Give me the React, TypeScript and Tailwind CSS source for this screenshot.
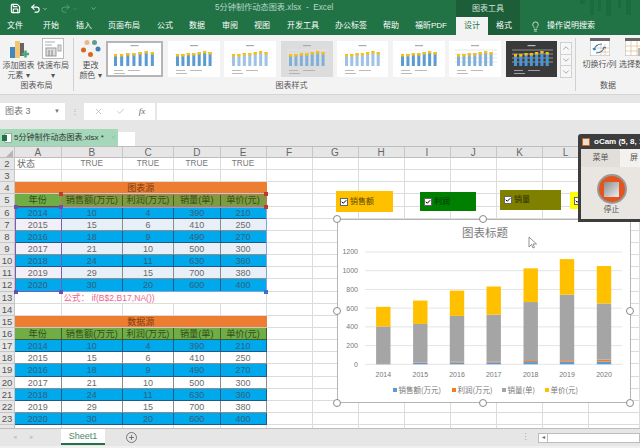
import React from 'react';
import { Save, Undo2, Redo2, ChevronDown, ChevronUp, Lightbulb, X, Check, Plus } from 'lucide-react';

const ribbonTabs = [
  { label: '文件', w: 'w-[30px]' },
  { label: '开始', w: 'w-[42px]' },
  { label: '插入', w: 'w-[24px]' },
  { label: '页面布局', w: 'w-[56px]' },
  { label: '公式', w: 'w-[26px]' },
  { label: '数据', w: 'w-[38px]' },
  { label: '审阅', w: 'w-[28px]' },
  { label: '视图', w: 'w-[36px]' },
  { label: '开发工具', w: 'w-[46px]' },
  { label: '办公标签', w: 'w-[50px]' },
  { label: '帮助', w: 'w-[30px]' },
  { label: '福昕PDF', w: 'w-[50px]' },
];

const columns = ['A', 'B', 'C', 'D', 'E', 'F', 'G', 'H', 'I', 'J', 'K', 'L'];

const headers = ['年份', '销售额(万元)', '利润(万元)', '销量(单)', '单价(元)'];

const tableData = [
  ['2014', '10', '4', '390', '210'],
  ['2015', '15', '6', '410', '250'],
  ['2016', '18', '9', '490', '270'],
  ['2017', '21', '10', '500', '300'],
  ['2018', '24', '11', '630', '360'],
  ['2019', '29', '15', '700', '380'],
  ['2020', '30', '20', '600', '400'],
];

const seriesColors = ['#5b9bd5', '#ed7d31', '#a5a5a5', '#ffc000'];

const RowNum = ({ n }: { n?: number }) => (
  <div className="bg-[#e6e6e6] border-r border-b border-[#c6c6c6] text-[9.5px] leading-[12px] text-[#555] text-center">{n}</div>
);

// the empty columns F to M right of the tables
const EmptyCells = () => (
  <>
    {Array.from({ length: 8 }).map((_, i) => (
      <div key={i} className="border-r border-b border-[#dcdcdc] bg-white" />
    ))}
  </>
);

const BlankRow = ({ n }: { n?: number }) => (
  <>
    <RowNum n={n} />
    {Array.from({ length: 13 }).map((_, i) => (
      <div key={i} className="border-r border-b border-[#dcdcdc] bg-white" />
    ))}
  </>
);

const BannerRow = ({ n, label }: { n: number; label: string }) => (
  <>
    <RowNum n={n} />
    <div className="col-span-5 bg-[#ed7d31] border-b border-[#c9c9c9] text-[9px] leading-[12px] text-center text-[#7a3c12]">{label}</div>
    <EmptyCells />
  </>
);

const HeaderRow = ({ n, tint }: { n: number; tint: boolean }) => (
  <>
    <RowNum n={n} />
    {headers.map((h, i) => (
      <div
        key={h}
        className={`border-r border-b border-[#3f5f2a] text-[9.2px] leading-[12px] text-center whitespace-nowrap text-[#2f4f17] ${
          tint && i > 0 ? 'bg-[#7f9a3f]' : 'bg-[#70ad47]'
        }`}
      >
        {h}
      </div>
    ))}
    <EmptyCells />
  </>
);

const DataRow = ({ n, values, stripe, tint }: { n: number; values: string[]; stripe: boolean; tint: boolean }) => (
  <>
    <RowNum n={n} />
    {values.map((v, i) => (
      <div
        key={i}
        className={`border-r border-b text-[9px] leading-[12px] text-center ${
          stripe
            ? 'bg-[#00a8ec] text-[#35607a] border-[#1d5a8a]'
            : tint
              ? `${i === 0 ? 'bg-[#f3eff8]' : 'bg-[#e9eff7]'} text-[#6a6a6a] border-[#8c8c8c]`
              : 'bg-white text-[#6a6a6a] border-[#8c8c8c]'
        }`}
      >
        {v}
      </div>
    ))}
    <EmptyCells />
  </>
);

const Handle = ({ className }: { className: string }) => (
  <div className={`absolute w-[4px] h-[4px] ${className}`} />
);

const RingHandle = ({ className }: { className: string }) => (
  <div className={`absolute w-[8px] h-[8px] rounded-full bg-white border border-[#8a8a8a] ${className}`} />
);

const CheckShape = ({ className, label, text }: { className: string; label?: string; text?: string }) => (
  <div className={`absolute flex items-center pl-[4px] gap-[2px] ${className}`}>
    <div className="w-[8px] h-[8px] bg-white border border-[#666] flex items-center justify-center shrink-0">
      <Check size={6} strokeWidth={4} className="text-black" />
    </div>
    {label && <span className={`text-[8px] leading-none whitespace-nowrap ${text}`}>{label}</span>}
  </div>
);

const MiniChart = ({ w, bg = '#ffffff', bar = '#5b9bd5', dim = '#aaa', ring = false, grid = false }: { w: number; bg?: string; bar?: string; dim?: string; ring?: boolean; grid?: boolean }) => {
  const heights = [12, 12, 13, 13, 14, 15, 14];
  return (
    <svg width={w} height={36} viewBox={`0 0 ${w} 36`} className={`shrink-0 ${ring ? 'outline-[2px] -outline-offset-2 outline outline-[#b5b5b5]' : ''}`}>
      <rect width={w} height={36} fill={bg} />
      <rect x={w / 2 - 4} y={4} width={8} height={1.2} fill={dim} />
      {[9, 13, 17, 21].map((y) => (
        <line key={y} x1={6} x2={w - 4} y1={y} y2={y} stroke={grid ? '#cfcfcf' : '#ececec'} strokeWidth={0.5} />
      ))}
      {heights.map((h, i) => {
        const x = 8 + i * ((w - 14) / 7);
        return (
          <g key={i}>
            <rect x={x} y={25 - h} width={3} height={h} fill={bar} />
            <rect x={x} y={25 - h} width={3} height={2.5} fill="#ffc000" />
          </g>
        );
      })}
      <rect x={8} y={29} width={9} height={0.8} fill={dim} />
      <rect x={22} y={29} width={12} height={0.8} fill={dim} />
      <rect x={8} y={32} width={11} height={0.8} fill={dim} />
    </svg>
  );
};

const ChartDrawing = () => {
  const x0 = 45;
  const yZero = 144.3;
  const scale = 0.0936;
  const centers = [45.3, 82.3, 119, 155.7, 192.7, 229, 266];
  const legend = [
    { x: 55, label: '销售额(万元)', c: seriesColors[0] },
    { x: 114, label: '利润(万元)', c: seriesColors[1] },
    { x: 164, label: '销量(单)', c: seriesColors[2] },
    { x: 207, label: '单价(元)', c: seriesColors[3] },
  ];
  return (
    <svg width={294} height={184} viewBox="0 0 294 184" className="block">
      <text x={147} y={17} textAnchor="middle" fontSize={11.5} fill="#7a7a7a" fontFamily="'Noto Sans CJK SC', sans-serif">图表标题</text>
      {[0, 200, 400, 600, 800, 1000, 1200].map((v) => {
        const y = yZero - v * scale;
        return (
          <g key={v}>
            <line x1={x0 - 18} x2={284} y1={y} y2={y} stroke="#e4e4e4" strokeWidth={1} />
            <text x={20} y={y + 2.5} textAnchor="end" fontSize={7} fill="#777" fontFamily="'Liberation Sans', sans-serif">{v}</text>
          </g>
        );
      })}
      {tableData.map((row, i) => {
        let y = yZero;
        return (
          <g key={row[0]}>
            {row.slice(1).map((val, s) => {
              const h = Number(val) * scale;
              y -= h;
              return <rect key={s} x={centers[i] - 7.2} y={y} width={14.4} height={h} fill={seriesColors[s]} />;
            })}
            <text x={centers[i]} y={156.5} textAnchor="middle" fontSize={7} fill="#777" fontFamily="'Liberation Sans', sans-serif">{row[0]}</text>
          </g>
        );
      })}
      {legend.map((l) => (
        <g key={l.label}>
          <rect x={l.x} y={168} width={4} height={4} fill={l.c} />
          <text x={l.x + 5.5} y={173} fontSize={7.5} fill="#777" fontFamily="'Noto Sans CJK SC', sans-serif">{l.label}</text>
        </g>
      ))}
    </svg>
  );
};

const App = () => {
  return (
    <div className="relative w-[640px] h-[448px] overflow-hidden bg-[#e6e6e6] font-['Liberation_Sans','Noto_Sans_CJK_SC',sans-serif]">
      {/* title bar */}
      <div className="relative h-[17px] bg-[#217346] flex items-center text-[#cfe3d8]">
        <div className="w-[215px] flex items-center pl-[10px] gap-[9px] text-white">
          <Save size={11} strokeWidth={2.5} />
          <Undo2 size={11} strokeWidth={2.5} />
          <ChevronDown size={6} className="-ml-[8px]" />
          <Redo2 size={11} className="text-[#5f9c7d] ml-[3px]" />
          <ChevronDown size={6} className="-ml-[8px] text-[#5f9c7d]" />
          <ChevronDown size={7} className="ml-[3px] text-[#a9cdb9]" />
        </div>
        <div className="w-[241px] text-[8.2px] whitespace-nowrap text-[#b9d6c6]">5分钟制作动态图表.xlsx&nbsp; - &nbsp;Excel</div>
        <div className="w-[64px] h-full bg-[#1b5e38] text-[8px] leading-[17px] text-center text-[#cfe3d8]">图表工具</div>
        <svg width={60} height={17} className="absolute right-0 top-0">
          <path d="M0 0h5v4H0zM10 0h4v15h-4zM18 0h3v11h-3zM26 0h5v16h-5zM38 0h3v8h-3zM46 0h5v15h-5z" fill="#1c6b40" />
        </svg>
      </div>

      {/* ribbon tabs */}
      <div className="h-[18px] bg-[#217346] flex items-center text-white text-[8px]">
        {ribbonTabs.map((t) => (
          <div key={t.label} className={`${t.w} text-center whitespace-nowrap`}>{t.label}</div>
        ))}
        <div className="w-[32px] h-full bg-[#f3f3f3] text-[#217346] text-center leading-[18px]">设计</div>
        <div className="w-[32px] h-full bg-[#1b5e38] text-center leading-[18px]">格式</div>
        <Lightbulb size={11} className="ml-[10px] text-[#d5e6dc]" />
        <div className="ml-[6px] whitespace-nowrap">操作说明搜索</div>
      </div>

      {/* ribbon */}
      <div className="h-[60px] bg-[#f3f3f3] border-b border-[#d5d5d5] flex text-[8px] text-[#555]">
        <div className="w-[74px] flex flex-col border-r border-[#d0d0d0] my-[3px]">
          <div className="flex h-[47px]">
            <div className="w-[37px] flex flex-col items-center">
              <svg width={20} height={20} viewBox="0 0 20 20" className="mt-[1px] shrink-0">
                <rect x="1" y="8" width="5" height="11" fill="#3f87c5" />
                <rect x="6" y="2" width="5" height="17" fill="#f2c66d" />
                <rect x="11" y="4" width="4" height="13" fill="#666" />
                <path d="M13 15h7M16.500 11.500v7" stroke="#49a77c" strokeWidth="2.500" />
              </svg>
              <div className="leading-[10px] mt-[2px] whitespace-nowrap">添加图表</div>
              <div className="leading-[10px] whitespace-nowrap">元素 ▾</div>
            </div>
            <div className="w-[32px] flex flex-col items-center">
              <svg width={22} height={21} viewBox="0 0 22 21" className="shrink-0">
                <rect x="0.500" y="0.500" width="21" height="20" fill="#fff" stroke="#bbb" />
                <path d="M3 4h10M3 7h7" stroke="#aaa" />
                <rect x="4" y="10" width="10" height="8" fill="#ddd" stroke="#999" />
                <path d="M7 18v-6M10 18v-6" stroke="#888" />
                <rect x="16" y="7" width="3" height="6" fill="#ddd" stroke="#aaa" />
              </svg>
              <div className="leading-[10px] mt-[2px] whitespace-nowrap">快速布局</div>
              <div className="leading-[10px]">▾</div>
            </div>
          </div>
          <div className="text-center leading-[10px]">图表布局</div>
        </div>

        <div className="flex-1 flex flex-col my-[3px] border-r border-[#d0d0d0]">
          <div className="flex h-[47px]">
            <div className="w-[33px] flex flex-col items-center">
              <svg width={20} height={20} viewBox="0 0 20 20" className="mt-[1px] shrink-0">
                <circle cx="6" cy="3.500" r="2.500" fill="#e8b78a" />
                <circle cx="13.500" cy="3.500" r="2.500" fill="#5f9e8a" />
                <circle cx="2.500" cy="11" r="2.500" fill="#d2691e" />
                <circle cx="17" cy="10" r="2.500" fill="#3f7fb5" />
                <circle cx="9.500" cy="15.500" r="2.500" fill="#e0661f" />
              </svg>
              <div className="leading-[10px] mt-[2px]">更改</div>
              <div className="leading-[10px] whitespace-nowrap">颜色 ▾</div>
            </div>
            <div className="flex gap-[4.500px] pt-[3px] h-[40px] -ml-[1px]">
              <MiniChart w={57} ring />
              <MiniChart w={52} />
              <MiniChart w={52} bar="#9dc3e6" />
              <MiniChart w={52} bg="#dcdcdc" bar="#7fb0dc" />
              <MiniChart w={51} bar="#9dc3e6" />
              <MiniChart w={52} />
              <MiniChart w={52} bar="#7fb0dc" grid />
              <MiniChart w={51} bg="#3a3a3a" bar="#4a95d8" dim="#bbb" />
            </div>
            <div className="ml-[3px] mt-[4px] w-[12px] h-[36px] flex flex-col border border-[#d0d0d0] bg-[#f7f7f7] text-[#9a9a9a] shrink-0">
              <div className="flex-1 flex items-center justify-center border-b border-[#d0d0d0]"><ChevronUp size={10} /></div>
              <div className="flex-1 flex items-center justify-center border-b border-[#d0d0d0]"><ChevronDown size={10} /></div>
              <div className="flex-1 flex items-center justify-center"><ChevronDown size={10} /></div>
            </div>
          </div>
          <div className="text-center leading-[10px] pr-[66px]">图表样式</div>
        </div>

        <div className="w-[64px] flex flex-col my-[3px] overflow-hidden shrink-0">
          <div className="flex h-[47px] pl-[7px] gap-[3px]">
            <div className="flex flex-col items-center w-[33px] shrink-0">
              <svg width={20} height={18} viewBox="0 0 20 18" className="shrink-0">
                <rect width="20" height="18" fill="#fff" stroke="#aaa" />
                <rect width="20" height="3" fill="#666" />
                <path d="M11 6v11M15 6v11M6 10h13M6 14h13" stroke="#e8b78a" strokeWidth="0.700" />
                <path d="M4 12c1-4 4-6 8-6M4 12l-1-2M4 12l2-1M14 9c0 3-3 6-8 6M14 9l-1 2M14 9l2 1" stroke="#2f7fc1" strokeWidth="1.200" fill="none" />
              </svg>
              <div className="leading-[10px] mt-[4px] whitespace-nowrap">切换行/列</div>
            </div>
            <div className="flex flex-col items-center shrink-0">
              <svg width={20} height={18} viewBox="0 0 20 18" className="shrink-0">
                <rect width="20" height="18" fill="#fff" stroke="#aaa" />
                <rect width="20" height="3" fill="#666" />
                <path d="M6 3v15M12 3v15M0 8h20M0 13h20" stroke="#e8b78a" strokeWidth="0.700" />
                <rect x="13" y="10" width="7" height="8" fill="#bbb" />
              </svg>
              <div className="leading-[10px] mt-[4px] whitespace-nowrap">选择数据</div>
            </div>
          </div>
          <div className="text-center leading-[10px]">数据</div>
        </div>
      </div>

      {/* formula bar */}
      <div className="h-[30px] flex items-start pt-[8px] text-[#777]">
        <div className="w-[65px] h-[17px] bg-white flex items-center justify-between px-[5px] text-[9px]">
          <span>图表 3</span>
          <span className="text-[6px]">▼</span>
        </div>
        <div className="w-[19px] text-center text-[8px] leading-[17px] text-[#aaa]">⋮</div>
        <div className="w-[71px] h-[17px] bg-white flex items-center justify-around px-[3px] text-[#b5b5b5]">
          <X size={9} />
          <Check size={9} />
          <span className="text-[9px] italic text-[#666] font-['Liberation_Serif',serif]">fx</span>
        </div>
        <div className="flex-1 h-[17px] ml-[2px] bg-white" />
      </div>

      {/* workbook tab strip */}
      <div className="h-[21px] flex items-end">
        <div className="w-[118px] h-[17px] bg-[#a4d8b9] flex items-center pl-[2px] text-[8px] text-[#333] whitespace-nowrap">
          <svg width={10} height={10} viewBox="0 0 10 10" className="shrink-0">
            <rect x="3" y="0.500" width="6.500" height="9" fill="#fff" stroke="#666" strokeWidth="0.500" />
            <rect x="0" y="2" width="5" height="6" fill="#217346" />
          </svg>
          <span className="ml-[2px]">5分钟制作动态图表.xlsx *</span>
          <X size={7} className="ml-[6px] text-[#8fb8a1]" />
        </div>
        <div className="w-[17px] h-[14px] bg-white" />
      </div>

      {/* sheet grid */}
      <div className="h-[282px] overflow-hidden border-t border-[#bdbdbd]">
        <div className="grid grid-cols-[15px_46.5px_61.5px_51px_46.5px_46px_46px_46px_46px_46px_46.5px_46px_46px_1fr] h-[11px] bg-[#e6e6e6] border-b border-[#bdbdbd]">
          <div className="border-r border-[#c6c6c6] flex items-end justify-end p-[1px]">
            <div className="w-0 h-0 border-l-[7px] border-l-transparent border-b-[7px] border-b-[#b5b5b5]" />
          </div>
          {columns.map((c) => (
            <div key={c} className="border-r border-[#c6c6c6] text-[10px] leading-[11px] text-center text-[#666]">{c}</div>
          ))}
          <div />
        </div>
        <div className="grid grid-cols-[15px_46.5px_61.5px_51px_46.5px_46px_46px_46px_46px_46px_46.5px_46px_46px_1fr] auto-rows-[12.15px]">
          <RowNum n={2} />
          <div className="border-r border-b border-[#dcdcdc] bg-white text-[9px] leading-[12px] pl-[2px] text-[#666]">状态</div>
          {['TRUE', 'TRUE', 'TRUE', 'TRUE'].map((t, i) => (
            <div key={i} className="border-r border-b border-[#dcdcdc] bg-white text-[8.2px] leading-[12px] text-center text-[#777]">{t}</div>
          ))}
          <EmptyCells />
          <BlankRow n={3} />
          <BannerRow n={4} label="图表源" />
          <HeaderRow n={5} tint />
          {tableData.map((row, i) => (
            <DataRow key={row[0]} n={6 + i} values={row} stripe={i % 2 === 0} tint />
          ))}
          <RowNum n={13} />
          <div className="border-r border-b border-[#dcdcdc] bg-white" />
          <div className="col-span-4 border-r border-b border-[#dcdcdc] bg-white text-[8.6px] leading-[12px] pl-[2px] text-[#f0648c] whitespace-nowrap">公式： if(B$2,B17,NA())</div>
          <EmptyCells />
          <BlankRow n={14} />
          <BannerRow n={15} label="数据源" />
          <HeaderRow n={16} tint={false} />
          {tableData.map((row, i) => (
            <DataRow key={row[0]} n={17 + i} values={row} stripe={i % 2 === 0} tint={false} />
          ))}
          <BlankRow />
        </div>
      </div>

      {/* sheet tabs */}
      <div className="h-[18px] bg-[#e6e6e6] border-t border-[#bdbdbd] flex items-center relative">
        <div className="w-[61px] flex pl-[13px] gap-[13px] text-[#c4c4c4] text-[7px]">
          <span>◂</span>
          <span>▸</span>
        </div>
        <div className="w-[44px] h-[16px] -mt-[2px] bg-white border-b-2 border-[#217346] text-[9px] leading-[14px] text-center text-[#4a8a68]">Sheet1</div>
        <div className="ml-[21px] w-[11px] h-[11px] rounded-full border border-[#777] flex items-center justify-center text-[#666]">
          <Plus size={7} strokeWidth={3} />
        </div>
        <div className="ml-[384px] text-[9px] text-[#aaa]">⋮</div>
        <div className="ml-[8px] flex-1 h-[10px] flex border border-[#bdbdbd] bg-white">
          <div className="w-[9px] border-r border-[#bdbdbd] flex items-center justify-center text-[6px] text-[#666]">◂</div>
        </div>
      </div>
      <div className="h-[2px] bg-[#f0f0f0]" />

      {/* range highlights over the sheet */}
      <div className="absolute left-[61px] top-[194px] w-[206px] h-[13px] border border-[#b9785f]" />
      <div className="absolute left-[61px] top-[207px] w-[206px] h-[85px] border border-[#7da7d9]" />
      <div className="absolute left-[15px] top-[207px] w-[47px] h-[85px] border border-[#7a5bb5]" />
      <Handle className="left-[59px] top-[192px] bg-[#c0392b]" />
      <Handle className="left-[264px] top-[192px] bg-[#c0392b]" />
      <Handle className="left-[264px] top-[205px] bg-[#c0392b]" />
      <Handle className="left-[59px] top-[205px] bg-[#6c4fb0]" />
      <Handle className="left-[14px] top-[205px] bg-[#6c4fb0]" />
      <Handle className="left-[14px] top-[290px] bg-[#6c4fb0]" />
      <Handle className="left-[59px] top-[290px] bg-[#6c4fb0]" />
      <Handle className="left-[264px] top-[290px] bg-[#3f6fc9]" />

      {/* form control checkboxes */}
      <CheckShape className="left-[336px] top-[191px] w-[57px] h-[21px] bg-[#ffc000]" label="销售额" text="text-[#5c4a00]" />
      <CheckShape className="left-[420px] top-[192px] w-[56px] h-[19px] bg-[#008000]" label="利润" text="text-[#06300a]" />
      <CheckShape className="left-[500px] top-[190px] w-[61px] h-[20px] bg-[#808000]" label="销量" text="text-[#2a2a00]" />
      <CheckShape className="left-[570px] top-[192px] w-[30px] h-[17px] bg-[#ffff00]" />

      {/* chart */}
      <div className="absolute left-[337px] top-[219px] w-[294px] h-[184px] bg-white border border-[#b5b5b5]">
        <ChartDrawing />
      </div>
      <RingHandle className="left-[333px] top-[215px]" />
      <RingHandle className="left-[479px] top-[215px]" />
      <RingHandle className="left-[333px] top-[307px]" />
      <RingHandle className="left-[626px] top-[307px]" />
      <RingHandle className="left-[333px] top-[399px]" />
      <RingHandle className="left-[479px] top-[399px]" />
      <RingHandle className="left-[626px] top-[399px]" />

      {/* mouse pointer */}
      <svg width={9} height={13} viewBox="0 0 9 13" className="absolute left-[528px] top-[236px]">
        <path d="M1 1v10l2.500-2.500L5 12l1.500-.7L5 8h3.500z" fill="#fff" stroke="#666" strokeWidth="0.700" />
      </svg>

      {/* oCam recorder window */}
      <div className="absolute left-[578px] top-[134px] w-[80px] h-[88px] bg-[#3d3d3d] rounded-t-[3px] p-[3px] pt-0 flex flex-col">
        <div className="h-[15px] flex items-center gap-[4px] shrink-0">
          <div className="w-[8px] h-[8px] ml-[1px] bg-[#e8e0d0] border border-[#c9622b] shrink-0" />
          <span className="text-[8px] font-bold text-white whitespace-nowrap">oCam (5, 8, 1</span>
        </div>
        <div className="flex-1 bg-[#e9e6e2] flex flex-col">
          <div className="flex h-[18px] text-[8px] text-[#555] shrink-0">
            <div className="w-[39px] bg-[#e2dfda] text-center leading-[18px]">菜单</div>
            <div className="flex-1 bg-[#f4f2ef] pl-[10px] leading-[18px]">屏</div>
          </div>
          <div className="w-[61px] flex flex-col items-center pt-[7px]">
            <div className="w-[30px] h-[30px] rounded-full bg-[#e2551f] border-[2px] border-[#9a9a9a] flex items-center justify-center">
              <div className="w-[15px] h-[15px] bg-gradient-to-br from-[#8c8c8c] to-[#f0f0f0]" />
            </div>
            <div className="text-[8px] leading-[11px] text-[#555]">停止</div>
          </div>
        </div>
      </div>
    </div>
  );
};

export default App;
